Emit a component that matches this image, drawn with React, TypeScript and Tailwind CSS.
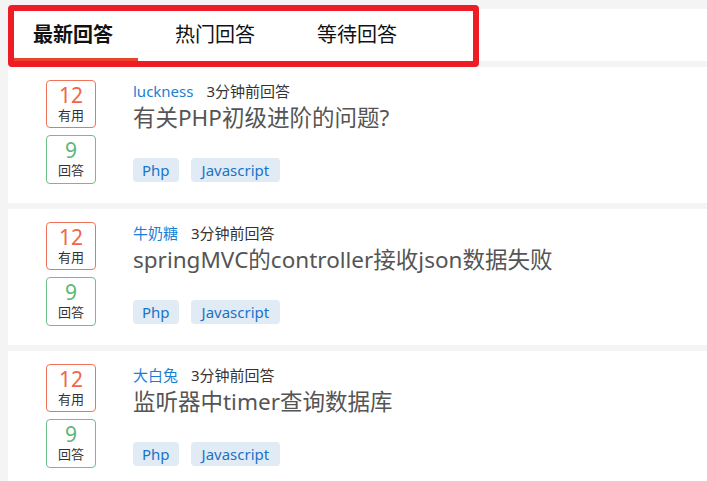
import React from "react";

const items = [
  { user: "luckness", title: "有关PHP初级进阶的问题?" },
  { user: "牛奶糖", title: "springMVC的controller接收json数据失败" },
  { user: "大白兔", title: "监听器中timer查询数据库" },
];

function Card({ user, title }: { user: string; title: string }) {
  return (
    <div className="bg-white h-[136px] flex pt-[13px]">
      <div className="w-[125px] flex flex-col items-start pl-[38px] gap-[7px]">
        <div className="w-[50px] h-[48px] border border-[#f2735c] rounded-[4px] flex flex-col items-center pt-[2px]">
          <div className="text-[21px] leading-[24px] text-[#f0654b]">12</div>
          <div className="text-[13px] leading-[17px] text-[#333]">有用</div>
        </div>
        <div className="w-[50px] h-[49px] border border-[#6cc08a] rounded-[4px] flex flex-col items-center pt-[2px]">
          <div className="text-[21px] leading-[24px] text-[#5cb87a]">9</div>
          <div className="text-[13px] leading-[17px] text-[#333]">回答</div>
        </div>
      </div>
      <div className="flex flex-col">
        <div className="flex items-center gap-[13px] text-[15px] leading-[20px] mt-[1px]">
          <span className="text-[#1a7fd4]">{user}</span>
          <span className="text-[#333]">3分钟前回答</span>
        </div>
        <div className="text-[22.5px] leading-[30px] text-[#555] mt-[2px]">{title}</div>
        <div className="flex gap-[12px] mt-[25px]">
          <span className="h-[24px] px-[9px] rounded-[4px] bg-[#e1ebf5] text-[#1a73c8] text-[15px] leading-[24px]">Php</span>
          <span className="h-[24px] px-[11px] rounded-[4px] bg-[#e1ebf5] text-[#1a73c8] text-[15px] leading-[24px]">Javascript</span>
        </div>
      </div>
    </div>
  );
}

export default function App() {
  return (
    <div
      className="w-[707px] h-[481px] overflow-hidden bg-[#f4f4f4] relative pl-[8px] pt-[9px]"
      style={{ fontFamily: '"Noto Sans", "Noto Sans CJK SC", sans-serif' }}
    >
      <div className="bg-white h-[52px] flex pl-[6px]">
        <div className="w-[142px] h-[52px] flex flex-col justify-between">
          <span className="text-[20px] leading-[28px] font-bold text-[#111] mt-[12px] pl-[19px]">最新回答</span>
          <span className="w-[124px] h-[3px] bg-[#e8452c]" />
        </div>
        <div className="w-[142px] h-[52px] flex">
          <span className="text-[20px] leading-[28px] text-[#111] mt-[12px] pl-[19px]">热门回答</span>
        </div>
        <div className="w-[142px] h-[52px] flex">
          <span className="text-[20px] leading-[28px] text-[#111] mt-[12px] pl-[19px]">等待回答</span>
        </div>
      </div>
      <div className="flex flex-col gap-[6px] mt-[6px]">
        {items.map((it) => (
          <Card key={it.user} user={it.user} title={it.title} />
        ))}
      </div>
      <div className="absolute left-[8px] top-[5px] w-[471px] h-[62px] border-[6px] border-[#ee1c25] rounded-[4px] pointer-events-none" />
    </div>
  );
}
